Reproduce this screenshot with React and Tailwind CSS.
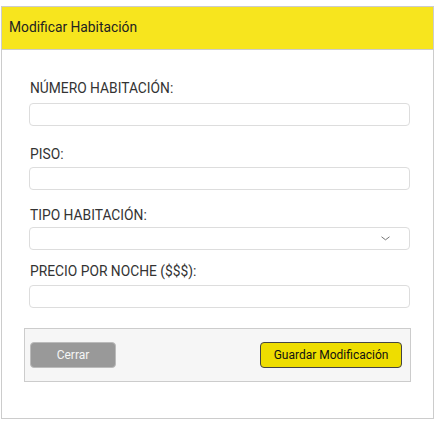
import React from 'react';

const Field = ({ label, labelClass, inputClass, select }) => (
  <div>
    <div className={`text-[13.8px] leading-4 text-[#333] pl-[1px] ${labelClass}`}>{label}</div>
    {select ? (
      <div className={`relative h-[23px] border border-[#ddd] rounded-[4px] bg-white ${inputClass}`}>
        <svg className="absolute right-[19px] top-[8px]" width="9" height="5" viewBox="0 0 9 5" fill="none">
          <path d="M0.5 0.8 L4.5 3.8 L8.5 0.8" stroke="#666" strokeWidth="0.9" />
        </svg>
      </div>
    ) : (
      <input className={`block w-full h-[23px] border border-[#ddd] rounded-[4px] bg-white outline-none ${inputClass}`} />
    )}
  </div>
);

export default function App() {
  return (
    <div className="w-[435px] h-[423px] bg-white pt-[6px] px-[1px]" style={{ fontFamily: 'Roboto, "Liberation Sans", sans-serif' }}>
      <div className="border border-[#ccc] h-[413px]">
        <div className="h-[43px] bg-[#f7e51e] border-b border-[#ccc] flex items-center pl-[7px] pb-[1px] text-[13.8px] text-[#222]">
          Modificar Habitación
        </div>
        <div className="px-[22px]">
          <div className="pl-[5px] pr-[1px]">
            <Field label="NÚMERO HABITACIÓN:" labelClass="mt-[30px]" inputClass="mt-[7px]" />
            <Field label="PISO:" labelClass="mt-[20px]" inputClass="mt-[5px]" />
            <Field label="TIPO HABITACIÓN:" labelClass="mt-[17px]" inputClass="mt-[4px]" select />
            <Field label="PRECIO POR NOCHE ($$$):" labelClass="mt-[13px]" inputClass="mt-[6px]" />
          </div>
          <div className="mt-[20px] h-[54px] border border-[#ccc] bg-[#f6f6f6] flex items-center justify-between pl-[5px] pr-[8px]">
            <button className="w-[86px] h-[26px] rounded-[4px] bg-[#999] border border-[#bbb] text-[12px] text-[#f5f5f5]">
              Cerrar
            </button>
            <button className="w-[142px] h-[26px] rounded-[4px] bg-[#eedd00] border border-[#444] text-[12px] text-[#111]">
              Guardar Modificación
            </button>
          </div>
        </div>
      </div>
    </div>
  );
}
